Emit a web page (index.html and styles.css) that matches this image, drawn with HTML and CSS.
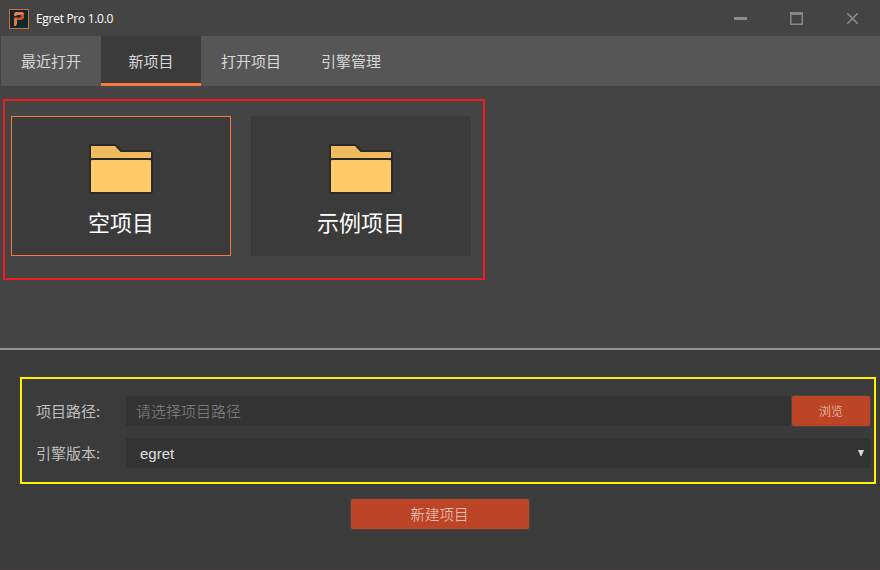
FILE: index.html
```html
<!DOCTYPE html>
<html lang="zh-CN">
<head>
<meta charset="utf-8">
<title>Egret Pro</title>
<link rel="stylesheet" href="styles.css">
</head>
<body>
<header class="titlebar">
  <svg class="logo" width="20" height="20" viewBox="0 0 20 20">
    <rect x=".5" y=".5" width="19" height="19" fill="#10272b" stroke="#cb6d43"/>
    <path d="M5 5.500Q5 3 7.500 3H12.500Q15 3 15 5.500V6H8.500Q7 6 7 7.500L5 6.500Z" fill="#e8824b"/>
    <path d="M15 5.500V8Q15 11 11.500 11H5V8.500H10.500Q12 8.500 12 7V5.500Z" fill="#cf512b"/>
    <path d="M5 9.500H8V14.500L7 17H5Z" fill="#e8743f"/>
  </svg>
  <h1 class="app-name">Egret Pro 1.0.0</h1>
  <div class="controls">
    <svg width="13" height="13" viewBox="0 0 13 13"><rect y="5" width="13" height="3" fill="#8c8c8c"/></svg>
    <svg width="13" height="13" viewBox="0 0 13 13"><path d="M0 0H13V13H0ZM1.500 3V11.500H11.500V3Z" fill="#868686" fill-rule="evenodd"/></svg>
    <svg width="13" height="13" viewBox="0 0 13 13"><path d="M1.300 1.300L11.700 11.700M11.700 1.300L1.300 11.700" stroke="#8c8c8c" stroke-width="1.600"/></svg>
  </div>
</header>
<nav class="tabs">
  <a class="tab">最近打开</a>
  <a class="tab active">新项目</a>
  <a class="tab">打开项目</a>
  <a class="tab">引擎管理</a>
</nav>
<main class="templates">
  <section class="template-frame">
    <div class="card selected">
      <svg class="folder" width="64" height="50" viewBox="0 0 64 50">
        <path d="M1 16V2Q1 1 2 1H26.500L32 7H62Q63 7 63 8V16Z" fill="#f0bb5e" stroke="#2b2b2b" stroke-width="2"/>
        <path d="M1 17Q1 15 3 15H61Q63 15 63 17V48Q63 49 62 49H2Q1 49 1 48Z" fill="#ffcb66" stroke="#2b2b2b" stroke-width="2"/>
      </svg>
      <span class="card-name">空项目</span>
    </div>
    <div class="card">
      <svg class="folder" width="64" height="50" viewBox="0 0 64 50">
        <path d="M1 16V2Q1 1 2 1H26.500L32 7H62Q63 7 63 8V16Z" fill="#f0bb5e" stroke="#2b2b2b" stroke-width="2"/>
        <path d="M1 17Q1 15 3 15H61Q63 15 63 17V48Q63 49 62 49H2Q1 49 1 48Z" fill="#ffcb66" stroke="#2b2b2b" stroke-width="2"/>
      </svg>
      <span class="card-name">示例项目</span>
    </div>
  </section>
</main>
<footer class="settings">
  <section class="form">
    <div class="row">
      <span class="label">项目路径:</span>
      <div class="field path">请选择项目路径</div>
      <button class="btn browse">浏览</button>
    </div>
    <div class="row">
      <span class="label">引擎版本:</span>
      <div class="field version"><span>egret</span>
        <svg width="6" height="6" viewBox="0 0 6 6"><path d="M0 0H6L3.500 6H2.500Z" fill="#d8d8d8"/></svg>
      </div>
    </div>
  </section>
  <button class="btn create">新建项目</button>
</footer>
</body>
</html>
```

FILE: styles.css
```css
* { box-sizing: border-box; }

body {
  margin: 0;
  width: 880px;
  height: 570px;
  display: flex;
  flex-direction: column;
  overflow: hidden;
  background: #444;
  color: #d6d6d6;
  font: 15px/20px "Noto Sans CJK SC", sans-serif;
}

.titlebar {
  height: 36px;
  flex: none;
  display: flex;
  align-items: center;
  padding: 2px 21px 0 9px;
}

.app-name {
  margin: 0 0 0 7px;
  font: 12px/16px "Open Sans", "Noto Sans", sans-serif;
  letter-spacing: -0.3px;
  color: #fff;
}

.controls {
  display: flex;
  gap: 43px;
  margin: 0 0 1px auto;
}

.tabs {
  height: 50px;
  flex: none;
  display: flex;
  margin-left: 1px;
  background: #565656;
}

.tab {
  width: 100px;
  padding-top: 15px;
  text-align: center;
}

.tab.active {
  background: #3b3b3b;
  border-bottom: 3px solid #f7793d;
}

.templates {
  height: 262px;
  flex: none;
  padding: 13px 3px;
}

.template-frame {
  width: 482px;
  height: 181px;
  display: flex;
  gap: 20px;
  padding: 15px 6px;
  border: 2px solid #ed1c24;
}

.card {
  width: 220px;
  height: 140px;
  display: flex;
  flex-direction: column;
  align-items: center;
  padding-top: 27px;
  border: 1px solid #3b3b3b;
  background: #3b3b3b;
}

.card.selected { border-color: #f7793d; }

.folder { flex: none; }

.card-name {
  margin-top: 12px;
  font-size: 22px;
  line-height: 30px;
  color: #fff;
}

.settings {
  height: 222px;
  flex: none;
  display: flex;
  flex-direction: column;
  padding: 27px 4px 0 20px;
  border-top: 2px solid #919191;
  border-bottom: 1px solid #463d40;
  background: #3b3b3b;
}

.form {
  height: 107px;
  display: flex;
  flex-direction: column;
  gap: 12px;
  padding: 17px 4px 0 14px;
  border: 2px solid #fff200;
}

.row {
  height: 30px;
  display: flex;
  align-items: center;
}

.label {
  width: 90px;
  flex: none;
  color: #bebebe;
}

.field {
  height: 30px;
  flex: 1;
  line-height: 30px;
  background: #333;
}

.path {
  padding-left: 10px;
  color: #858585;
  font-weight: 300;
}

.version {
  display: flex;
  align-items: center;
  justify-content: space-between;
  padding: 0 6px 0 14px;
  font-family: "Liberation Sans", sans-serif;
  color: #e0e0e0;
}

.version span { padding-top: 2px; }

.btn {
  height: 30px;
  padding: 0 0 2px;
  border: 0;
  border-radius: 2px;
  box-shadow: 0 0 0 1px #484442;
  background: #bc4527;
  color: #f2d0c6;
  font-family: "Noto Sans CJK SC", sans-serif;
  font-weight: 300;
}

.browse {
  width: 78px;
  font-size: 12px;
}

.create {
  width: 178px;
  margin: 15px 0 0 331px;
  padding-right: 1px;
  font-size: 14.500px;
}
```
